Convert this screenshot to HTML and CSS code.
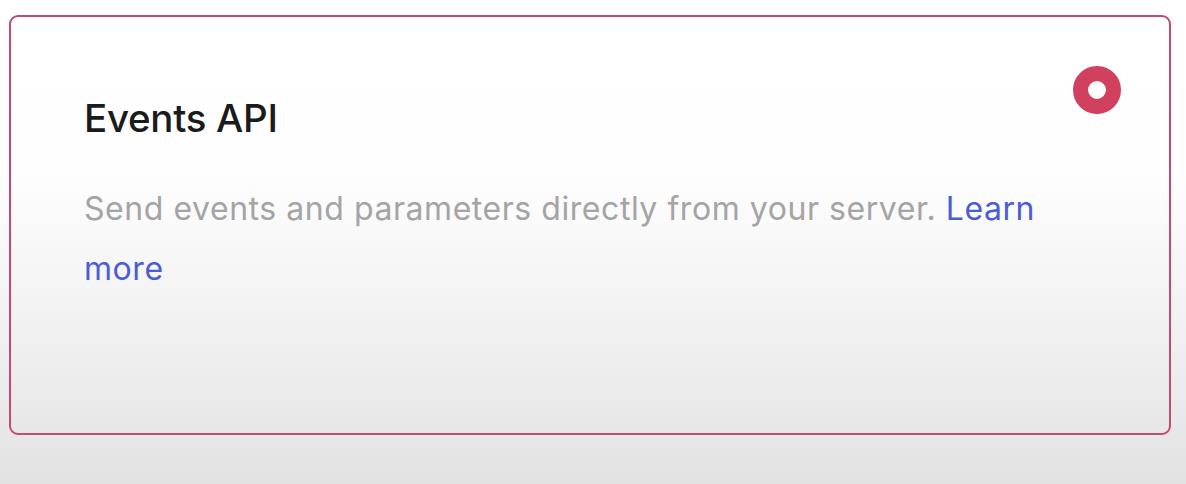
FILE: index.html
```html
<!DOCTYPE html>
<html lang="en">
<head>
<meta charset="utf-8">
<title>Events API</title>
<link rel="stylesheet" href="styles.css">
</head>
<body>
<div class="page">
  <section class="card">
    <div class="card-head">
      <h2 class="card-title">Events API</h2>
      <span class="radio" aria-label="selected"></span>
    </div>
    <p class="card-desc">Send events and parameters directly from your server. <a href="#" class="link">Learn more</a></p>
  </section>
</div>
</body>
</html>
```

FILE: styles.css
```css
html, body {
  margin: 0;
  padding: 0;
}
body {
  width: 1186px;
  height: 484px;
  overflow: hidden;
  background: linear-gradient(to bottom, #ffffff 0px, #fefefe 170px, #f1f1f1 330px, #e2e2e2 484px);
  font-family: Inter, "Liberation Sans", Arial, sans-serif;
}
.page {
  padding: 15px 15px 0 9px;
}
.card {
  box-sizing: border-box;
  width: 1162px;
  height: 420px;
  border: 2px solid #c64a6b;
  border-radius: 9px;
  padding: 49px 48px 0 73px;
}
.card-head {
  display: flex;
  justify-content: space-between;
  align-items: flex-start;
}
.card-title {
  margin: 29px 0 0 0;
  font-size: 38.5px;
  line-height: 46px;
  font-weight: 500;
  color: #1b1b1b;
  letter-spacing: -0.3px;
}
.radio {
  box-sizing: border-box;
  width: 48px;
  height: 48px;
  border-radius: 50%;
  border: 15px solid #d2405f;
  background: #ffffff;
  flex: none;
}
.card-desc {
  margin: 38px 0 0 0;
  max-width: 960px;
  font-size: 32px;
  line-height: 60px;
  letter-spacing: 0.55px;
  color: #a4a4a4;
}
.link {
  color: #4a5dd3;
  text-decoration: none;
}
```
